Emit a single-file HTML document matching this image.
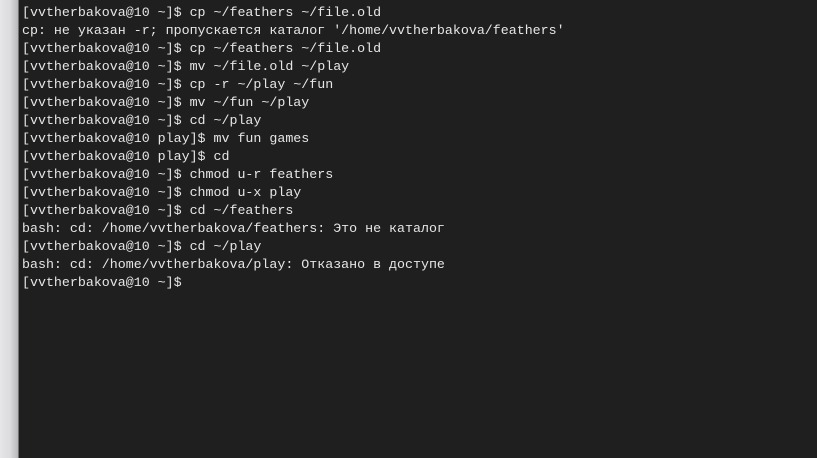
<!DOCTYPE html>
<html><head><meta charset="utf-8"><style>
html,body{margin:0;padding:0;width:817px;height:458px;overflow:hidden;background:#1f1f1f}
.strip{position:absolute;left:0;top:0;width:19px;height:458px;background:linear-gradient(to right,#e6e6e8 0,#dcdcde 10px,#b8b8ba 18px,#2a2a2a 19px)}
pre{position:absolute;left:22px;top:4px;margin:0;font-family:"Liberation Mono","DejaVu Sans Mono",monospace;font-size:13.3px;line-height:18px;color:#e6e6e6}
</style></head><body>
<div class="strip"></div>
<pre>[vvtherbakova@10 ~]$ cp ~/feathers ~/file.old
cp: не указан -r; пропускается каталог '/home/vvtherbakova/feathers'
[vvtherbakova@10 ~]$ cp ~/feathers ~/file.old
[vvtherbakova@10 ~]$ mv ~/file.old ~/play
[vvtherbakova@10 ~]$ cp -r ~/play ~/fun
[vvtherbakova@10 ~]$ mv ~/fun ~/play
[vvtherbakova@10 ~]$ cd ~/play
[vvtherbakova@10 play]$ mv fun games
[vvtherbakova@10 play]$ cd
[vvtherbakova@10 ~]$ chmod u-r feathers
[vvtherbakova@10 ~]$ chmod u-x play
[vvtherbakova@10 ~]$ cd ~/feathers
bash: cd: /home/vvtherbakova/feathers: Это не каталог
[vvtherbakova@10 ~]$ cd ~/play
bash: cd: /home/vvtherbakova/play: Отказано в доступе
[vvtherbakova@10 ~]$</pre>
</body></html>
